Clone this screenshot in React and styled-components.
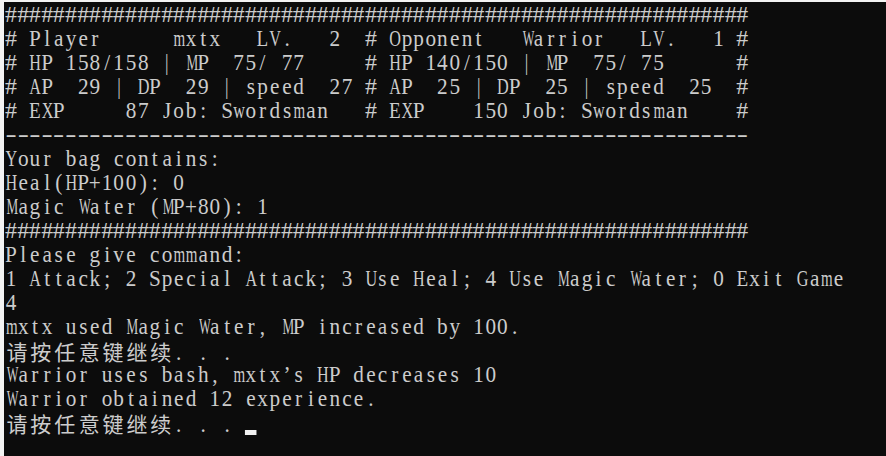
import React from "react";
import styled, { createGlobalStyle } from "styled-components";

const Global = createGlobalStyle`
  html, body {
    margin: 0;
    padding: 0;
    background: #f3f3f3;
    overflow: hidden;
  }
`;

const Window = styled.div`
  width: 886px;
  height: 456px;
  padding: 2px 0 0 4px;
  box-sizing: border-box;
  background: #f3f3f3;
`;

const Console = styled.div`
  height: 100%;
  background: #0c0c0c;
  color: #cccccc;
  padding: 1px 0 0 1px;
  box-sizing: border-box;
  overflow: hidden;
`;

// one console row; cells are laid out at 15.6px and squeezed to the 12px grid
const Line = styled.div`
  height: 24px;
  line-height: 24px;
  white-space: nowrap;
  font-family: "Liberation Serif", serif;
  font-size: 23px;
  transform: scaleX(0.769);
  transform-origin: 0 0;
`;

const Cell = styled.span`
  display: inline-block;
  width: 15.6px;
  text-align: center;
  white-space: pre;
  transform: scaleX(${(p) => p.$sx});
`;

const WideCell = styled(Cell)`
  width: 31.2px;
  font-family: "Noto Sans CJK SC", sans-serif;
  font-size: 21px;
`;

const Cursor = styled(Cell)`
  height: 5px;
  background: #f2f2f2;
  vertical-align: -3px;
`;

// Times advance widths (em) of the glyphs that would spill out of a 12px cell
const advance = {
  A: 0.722, B: 0.667, C: 0.667, D: 0.722, E: 0.611, F: 0.556, G: 0.722,
  H: 0.722, K: 0.722, L: 0.611, M: 0.889, N: 0.722, O: 0.722, Q: 0.722,
  R: 0.667, T: 0.611, U: 0.722, V: 0.722, W: 0.944, X: 0.722, Y: 0.722,
  Z: 0.611, m: 0.778, w: 0.722,
};
// SimSun draws these wider than Times does
const stretch = { "#": 1.35, "-": 1.9, "|": 1 };

const scaleFor = (ch) => {
  if (stretch[ch]) return stretch[ch];
  const adv = advance[ch];
  return adv ? Math.min(1.2, 0.66 / adv) : 1.2;
};

const Row = ({ text, cursor }) => (
  <Line>
    {[...text].map((ch, i) =>
      ch.charCodeAt(0) > 0x2e80 ? (
        <WideCell key={i} $sx={1.3}>
          {ch}
        </WideCell>
      ) : (
        <Cell key={i} $sx={scaleFor(ch)}>
          {ch}
        </Cell>
      )
    )}
    {cursor && <Cursor $sx={1} />}
  </Line>
);

const PAUSE = "请按任意键继续. . . ";

const lines = [
  "#".repeat(62),
  "# Player      mxtx   LV.   2  # Opponent   Warrior   LV.   1 #",
  "# HP 158/158 | MP  75/ 77     # HP 140/150 | MP  75/ 75      #",
  "# AP  29 | DP  29 | speed  27 # AP  25 | DP  25 | speed  25  #",
  "# EXP     87 Job: Swordsman   # EXP    150 Job: Swordsman    #",
  "-".repeat(62),
  "Your bag contains:",
  "Heal(HP+100): 0",
  "Magic Water (MP+80): 1",
  "#".repeat(62),
  "Please give command:",
  "1 Attack; 2 Special Attack; 3 Use Heal; 4 Use Magic Water; 0 Exit Game",
  "4",
  "mxtx used Magic Water, MP increased by 100.",
  PAUSE,
  "Warrior uses bash, mxtx\u2019s HP decreases 10",
  "Warrior obtained 12 experience.",
];

const App = () => (
  <Window>
    <Global />
    <Console>
      {lines.map((l, i) => (
        <Row key={i} text={l} />
      ))}
      <Row text={PAUSE} cursor />
    </Console>
  </Window>
);

export default App;
